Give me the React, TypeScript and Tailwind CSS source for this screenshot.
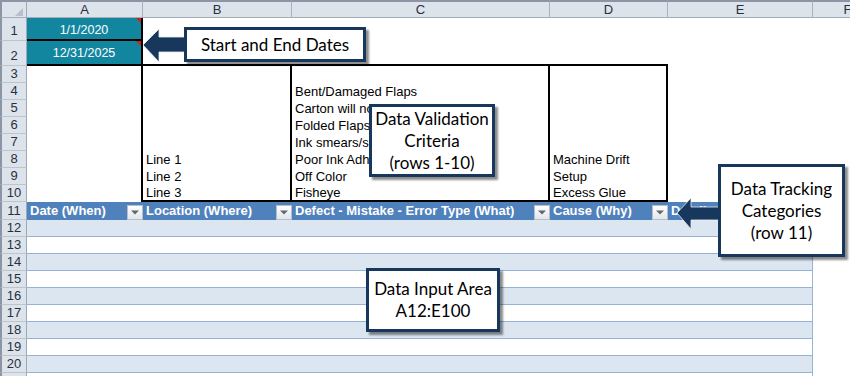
import React from "react";

function ColHead({ label }: { label: string }) {
  return (
    <div className="bg-[#dde3eb] border-t-2 border-t-[#8b95a3] border-r border-r-[#a9b2be] border-b border-b-[#a3adba] flex items-center justify-center leading-none text-[#27313d]">
      {label}
    </div>
  );
}

function RowHead({ n, bottom, hide }: { n: number; bottom?: boolean; hide?: boolean }) {
  return (
    <div
      className={
        bottom
          ? "bg-[#dde3eb] border-l-2 border-l-[#8b95a3] border-r border-r-[#9ea9b7] border-b border-b-[#bcc4ce] flex items-end justify-center pb-[1px] leading-[16px] text-[#27313d]"
          : "bg-[#dde3eb] border-l-2 border-l-[#8b95a3] border-r border-r-[#9ea9b7] border-b border-b-[#bcc4ce] flex items-center justify-center leading-[16px] text-[#27313d]"
      }
    >
      {hide ? "" : n}
    </div>
  );
}

function FilterBtn() {
  return (
    <div className="absolute right-0 top-[3px] w-[16px] h-[15px] border border-[#b7bec8] bg-linear-to-b from-white to-[#e2e6eb] flex items-center justify-center">
      <svg width="8" height="5" viewBox="0 0 8 5">
        <path d="M0 0.5h8L4 4.5z" fill="#5f6770" />
      </svg>
    </div>
  );
}

function Callout({
  className,
  lines,
}: {
  className: string;
  lines: string[];
}) {
  return (
    <div
      className={
        "absolute bg-white border-[3px] border-[#18375c] shadow-[3px_3px_2px_rgba(0,0,0,0.45)] flex flex-col items-center justify-center font-['Lato','Open_Sans',sans-serif] text-[17px] leading-[22px] text-black " +
        className
      }
    >
      {lines.map((l) => (
        <div key={l} className="whitespace-nowrap">
          {l}
        </div>
      ))}
    </div>
  );
}

const B: Record<number, string> = { 8: "Line 1", 9: "Line 2", 10: "Line 3" };
const C: Record<number, string> = {
  4: "Bent/Damaged Flaps",
  5: "Carton will not open",
  6: "Folded Flaps",
  7: "Ink smears/smudges",
  8: "Poor Ink Adhesion",
  9: "Off Color",
  10: "Fisheye",
};
const D: Record<number, string> = { 8: "Machine Drift", 9: "Setup", 10: "Excess Glue" };

const headers = [
  "Date (When)",
  "Location (Where)",
  "Defect - Mistake - Error Type (What)",
  "Cause (Why)",
  "Details (How)",
];

export default function App() {
  const cells: React.ReactNode[] = [];

  // column header row
  cells.push(
    <div
      key="corner"
      className="relative bg-[#dde3eb] border-t-2 border-t-[#8b95a3] border-l-2 border-l-[#8b95a3] border-r border-r-[#9ea9b7] border-b border-b-[#a3adba]"
    >
      <div className="absolute right-[3px] bottom-[1px] w-0 h-0 border-l-[8px] border-l-transparent border-b-[8px] border-b-[#b7bfca]" />
    </div>
  );
  ["A", "B", "C", "D", "E", "F"].forEach((l) => cells.push(<ColHead key={"h" + l} label={l} />));

  // row 1
  cells.push(<RowHead key="r1" n={1} bottom />);
  cells.push(
    <div
      key="a1"
      className="relative bg-[#13869f] text-white border-r-2 border-r-black border-b-2 border-b-black flex items-end justify-center pb-[1px] leading-[16px] text-[12.5px]"
    >
      1/1/2020
      <div className="absolute right-0 top-0 w-0 h-0 border-l-[5px] border-l-transparent border-t-[5px] border-t-[#e0161b]" />
    </div>
  );
  for (let i = 0; i < 5; i++) cells.push(<div key={"r1c" + i} />);

  // row 2
  cells.push(<RowHead key="r2" n={2} bottom />);
  cells.push(
    <div
      key="a2"
      className="relative bg-[#13869f] text-white border-r-2 border-r-black border-b-2 border-b-black flex items-end justify-center pb-[3px] leading-[16px] text-[12.5px]"
    >
      12/31/2025
      <div className="absolute right-0 top-0 w-0 h-0 border-l-[5px] border-l-transparent border-t-[5px] border-t-[#e0161b]" />
    </div>
  );
  cells.push(<div key="b2" className="border-b-2 border-b-black" />);
  cells.push(<div key="c2" className="border-b-2 border-b-black" />);
  cells.push(<div key="d2" className="border-b-2 border-b-black" />);
  cells.push(<div key="e2" />);
  cells.push(<div key="f2" />);

  // rows 3-10
  for (let r = 3; r <= 10; r++) {
    const last = r === 10;
    const cls = last
      ? "border-r-2 border-r-black border-b-2 border-b-black pl-[3px] leading-[15px] whitespace-nowrap overflow-hidden"
      : "border-r-2 border-r-black pl-[3px] leading-[17px] whitespace-nowrap overflow-hidden";
    cells.push(<RowHead key={"r" + r} n={r} />);
    cells.push(<div key={"a" + r} className="border-r-2 border-r-black" />);
    cells.push(
      <div key={"b" + r} className={cls}>
        {B[r] ?? ""}
      </div>
    );
    cells.push(
      <div key={"c" + r} className={cls}>
        {C[r] ?? ""}
      </div>
    );
    cells.push(
      <div key={"d" + r} className={cls}>
        {D[r] ?? ""}
      </div>
    );
    cells.push(<div key={"e" + r} />);
    cells.push(<div key={"f" + r} />);
  }

  // row 11 - table header
  cells.push(<RowHead key="r11" n={11} />);
  headers.forEach((h, i) =>
    cells.push(
      <div
        key={"th" + i}
        className="relative bg-[#4f81bd] text-white font-bold pl-[3px] leading-[18px] whitespace-nowrap overflow-hidden"
      >
        {h}
        <FilterBtn />
      </div>
    )
  );
  cells.push(<div key="f11" />);

  // rows 12-21 banded
  for (let r = 12; r <= 21; r++) {
    const band = r % 2 === 0;
    cells.push(<RowHead key={"r" + r} n={r} hide={r === 21} />);
    for (let c = 0; c < 5; c++) {
      const isE = c === 4;
      let cls = band
        ? "bg-[#dce6f1] border-b border-b-[#95b3d7]"
        : "bg-white border-b border-b-[#95b3d7]";
      if (isE) cls += " border-r border-r-[#95b3d7]";
      cells.push(<div key={"t" + r + "-" + c} className={cls} />);
    }
    cells.push(<div key={"f" + r} />);
  }

  return (
    <div className="relative w-[850px] h-[376px] overflow-hidden bg-white font-['Liberation_Sans',Arial,sans-serif] text-[13px] text-black">
      <div className="grid w-[883px] grid-cols-[27px_116px_149px_258px_118px_145px_70px] grid-rows-[18px_23px_25px_repeat(8,17px)_18px_repeat(10,17px)]">
        {cells}
      </div>

      {/* arrow to dates */}
      <svg
        className="absolute left-[142px] top-[27px]"
        width="48"
        height="37"
        viewBox="0 0 48 37"
      >
        <polygon
          points="1,18 17,2 17,10 46,10 46,25 17,25 17,35"
          fill="#18375c"
          stroke="#e8edf3"
          strokeWidth="0.8"
        />
      </svg>
      <Callout className="left-[184px] top-[27px] w-[182px] h-[35px]" lines={["Start and End Dates"]} />

      <Callout
        className="left-[369px] top-[104px] w-[126px] h-[73px]"
        lines={["Data Validation", "Criteria", "(rows 1-10)"]}
      />

      {/* arrow to categories */}
      <svg
        className="absolute left-[675px] top-[196px]"
        width="48"
        height="35"
        viewBox="0 0 48 35"
      >
        <polygon
          points="2,17 16,2 16,11 46,11 46,24 16,24 16,33"
          fill="#18375c"
          stroke="#e8edf3"
          strokeWidth="0.8"
        />
      </svg>
      <Callout
        className="left-[718px] top-[164px] w-[127px] h-[93px]"
        lines={["Data Tracking", "Categories", "(row 11)"]}
      />

      <Callout
        className="left-[366px] top-[268px] w-[134px] h-[64px]"
        lines={["Data Input Area", "A12:E100"]}
      />
    </div>
  );
}
